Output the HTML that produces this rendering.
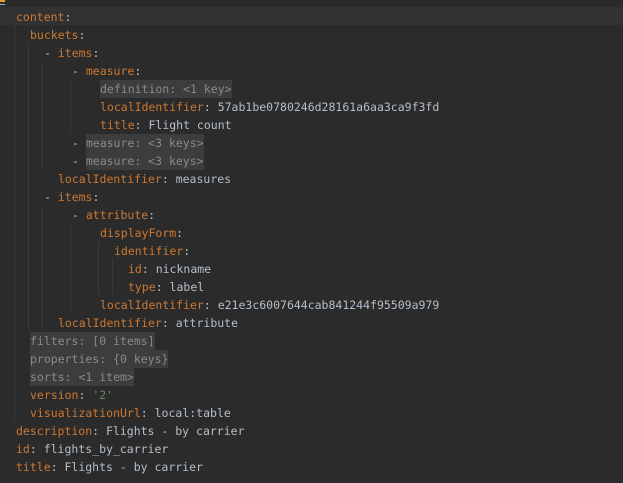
<html><head><style>
body{margin:0;width:623px;height:483px;background:#2b2b2b;overflow:hidden;position:relative;font-family:"DejaVu Sans Mono","Liberation Mono",monospace;font-size:11.5px}
.l{position:absolute;left:0;height:18px;line-height:20px;white-space:pre;color:#b4bfca}
.k{color:#cc7832}
.f{color:#8a8a8a;background:#3d3d3d;padding:2px 0}
.g{position:absolute;width:1px;background:#383838}
</style></head><body>
<div style="position:absolute;left:0;top:7px;width:623px;height:18px;background:#323232"></div>
<div style="position:absolute;left:0;top:0;width:5px;height:2px;background:#e0a030"></div>
<div style="position:absolute;left:0;top:4px;width:5px;height:1px;background:#aaa"></div>
<div class="g" style="left:14px;top:25px;height:396px"></div>
<div class="g" style="left:28px;top:43px;height:288px"></div>
<div class="g" style="left:42px;top:61px;height:108px"></div>
<div class="g" style="left:70px;top:79px;height:54px"></div>
<div class="g" style="left:42px;top:205px;height:126px"></div>
<div class="g" style="left:70px;top:223px;height:90px"></div>
<div class="g" style="left:98px;top:241px;height:54px"></div>
<div class="g" style="left:112px;top:259px;height:36px"></div>
<div class="l" style="top:7px;left:16px"><span class="k">content</span>:</div>
<div class="l" style="top:25px;left:30px"><span class="k">buckets</span>:</div>
<div class="l" style="top:43px;left:44px">- <span class="k">items</span>:</div>
<div class="l" style="top:61px;left:72px">- <span class="k">measure</span>:</div>
<div class="l" style="top:79px;left:100px"><span class="f">definition: &lt;1 key&gt;</span></div>
<div class="l" style="top:97px;left:100px"><span class="k">localIdentifier</span>: 57ab1be0780246d28161a6aa3ca9f3fd</div>
<div class="l" style="top:115px;left:100px"><span class="k">title</span>: Flight count</div>
<div class="l" style="top:133px;left:72px">- <span class="f">measure: &lt;3 keys&gt;</span></div>
<div class="l" style="top:151px;left:72px">- <span class="f">measure: &lt;3 keys&gt;</span></div>
<div class="l" style="top:169px;left:58px"><span class="k">localIdentifier</span>: measures</div>
<div class="l" style="top:187px;left:44px">- <span class="k">items</span>:</div>
<div class="l" style="top:205px;left:72px">- <span class="k">attribute</span>:</div>
<div class="l" style="top:223px;left:100px"><span class="k">displayForm</span>:</div>
<div class="l" style="top:241px;left:114px"><span class="k">identifier</span>:</div>
<div class="l" style="top:259px;left:128px"><span class="k">id</span>: nickname</div>
<div class="l" style="top:277px;left:128px"><span class="k">type</span>: label</div>
<div class="l" style="top:295px;left:100px"><span class="k">localIdentifier</span>: e21e3c6007644cab841244f95509a979</div>
<div class="l" style="top:313px;left:58px"><span class="k">localIdentifier</span>: attribute</div>
<div class="l" style="top:331px;left:30px"><span class="f">filters: [0 items]</span></div>
<div class="l" style="top:349px;left:30px"><span class="f">properties: {0 keys}</span></div>
<div class="l" style="top:367px;left:30px"><span class="f">sorts: &lt;1 item&gt;</span></div>
<div class="l" style="top:385px;left:30px"><span class="k">version</span>: <span style="color:#6a8759">'2'</span></div>
<div class="l" style="top:403px;left:30px"><span class="k">visualizationUrl</span>: local:table</div>
<div class="l" style="top:421px;left:16px"><span class="k">description</span>: Flights - by carrier</div>
<div class="l" style="top:439px;left:16px"><span class="k">id</span>: flights_by_carrier</div>
<div class="l" style="top:457px;left:16px"><span class="k">title</span>: Flights - by carrier</div>
</body></html>
